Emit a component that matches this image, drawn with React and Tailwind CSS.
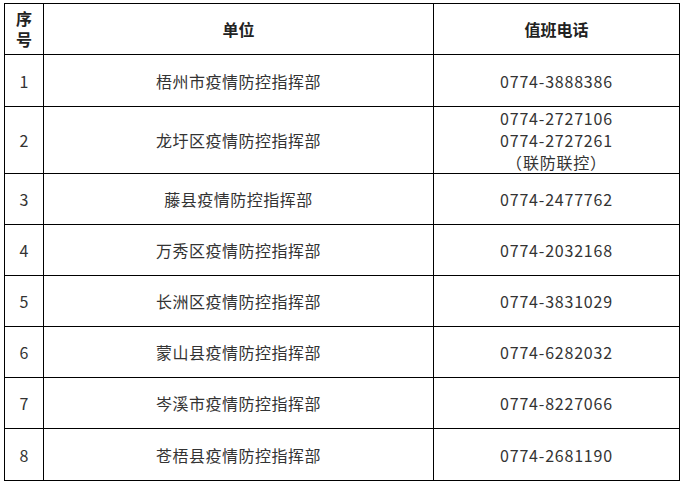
export default function App() {
  const rows = [
    ["1", "梧州市疫情防控指挥部", ["0774-3888386"], "h-[52px]"],
    ["2", "龙圩区疫情防控指挥部", ["0774-2727106", "0774-2727261", "（联防联控）"], "h-[67px]"],
    ["3", "藤县疫情防控指挥部", ["0774-2477762"], "h-[51px]"],
    ["4", "万秀区疫情防控指挥部", ["0774-2032168"], "h-[51px]"],
    ["5", "长洲区疫情防控指挥部", ["0774-3831029"], "h-[51px]"],
    ["6", "蒙山县疫情防控指挥部", ["0774-6282032"], "h-[51px]"],
    ["7", "岑溪市疫情防控指挥部", ["0774-8227066"], "h-[51px]"],
    ["8", "苍梧县疫情防控指挥部", ["0774-2681190"], "h-[52px]"],
  ];
  return (
    <div className="w-[684px] h-[484px] bg-white pt-[3px] pl-[4px]" style={{ fontFamily: '"Noto Sans CJK SC", "Noto Sans", sans-serif' }}>
      <table className="border-collapse text-[#333] text-[16px] table-fixed w-[675px]">
        <colgroup>
          <col className="w-[39px]" />
          <col className="w-[390px]" />
          <col className="w-[246px]" />
        </colgroup>
        <thead>
          <tr className="h-[51px]">
            <th className="border border-black font-bold text-[16px] leading-[21px] text-[#222] p-0">
              <div>序</div>
              <div>号</div>
            </th>
            <th className="border border-black font-bold text-[16px] text-[#222] p-0">单位</th>
            <th className="border border-black font-bold text-[16px] text-[#222] p-0">值班电话</th>
          </tr>
        </thead>
        <tbody>
          {rows.map(([n, name, phones, h]) => (
            <tr key={n} className={h}>
              <td className="border border-black text-center p-0">{n}</td>
              <td className="border border-black text-center p-0 tracking-[0.5px]">{name}</td>
              <td className="border border-black text-center p-0 leading-[22px] tracking-[0.8px]">
                {phones.map((p, i) => (
                  <div key={i}>{p}</div>
                ))}
              </td>
            </tr>
          ))}
        </tbody>
      </table>
    </div>
  );
}
